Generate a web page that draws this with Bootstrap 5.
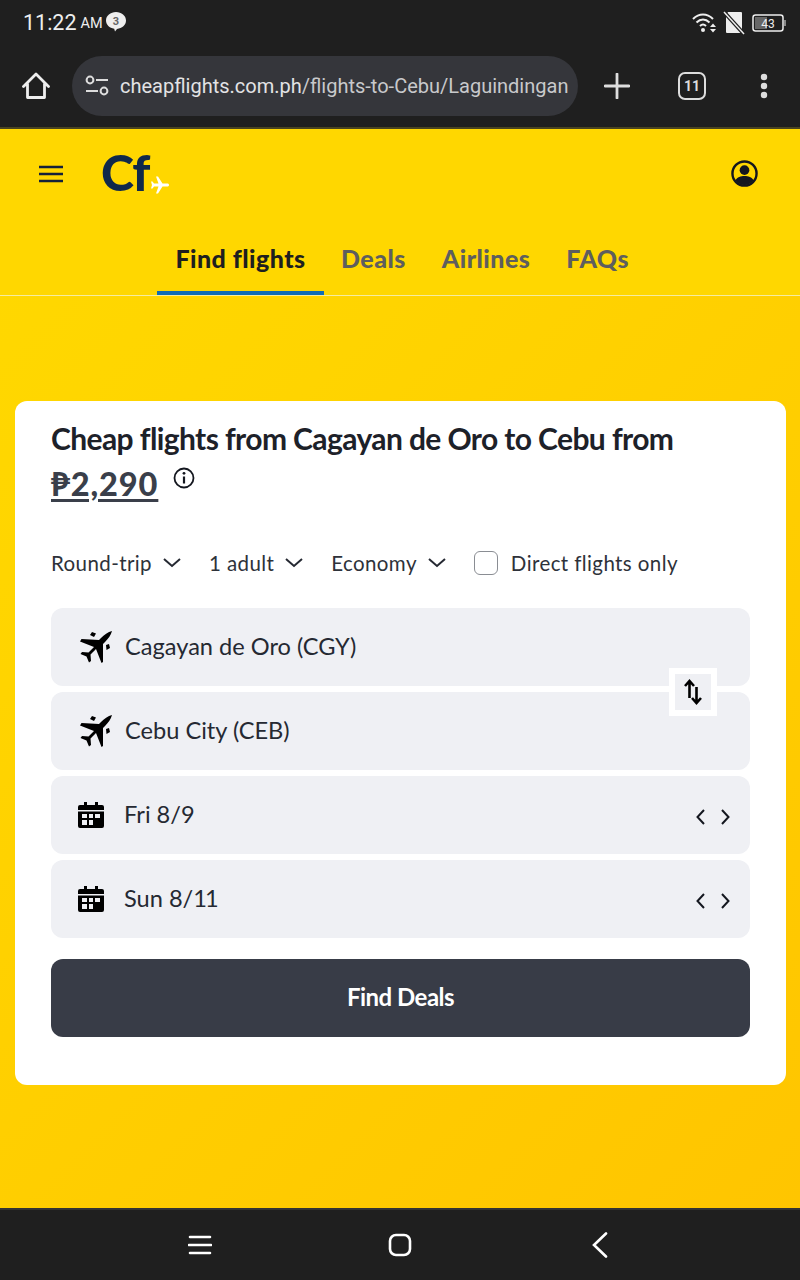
<!DOCTYPE html>
<html lang="en">
<head>
<meta charset="utf-8">
<title>Cheap flights</title>
<link rel="stylesheet" href="https://cdn.jsdelivr.net/npm/bootstrap@5.3.0/dist/css/bootstrap.min.css">
<style>
html,body{height:1280px;overflow:hidden;}
body{font-family:"Lato","Liberation Sans",sans-serif;background:#1f1f1f;}
.sys-bar{height:44px;background:#1f1f1f;padding:1px 14px 0 23px;color:#eee;font-family:Roboto,sans-serif;}
.sys-time{font-size:21.5px;line-height:1;}
.sys-ampm{font-size:14.5px;margin-left:4px;margin-right:2px;margin-top:3px;}
.chat-icon{margin-bottom:2px;}
.sys-icons{gap:7px;}
.tool-bar{height:83px;background:#1f1f1f;}
.tool-home{width:72px;}
.url-pill{width:506px;height:60px;background:#35363b;border-radius:30px;padding-left:13px;color:#c8c9cb;font-family:Roboto,sans-serif;font-size:20px;white-space:nowrap;gap:11px;}
.url-text{padding-top:1px;}
.url-host{color:#e3e3e5;}
.tool-act{padding-left:26px;}
.tab-count{width:28px;height:28px;margin-left:48px;border:2.5px solid #ddd;border-radius:7px;color:#ddd;font:700 14px/1 Roboto,sans-serif;}
.dots-icon{margin-left:54px;}
.rule-top{height:2px;background:#4a4420;}
.page-area{height:1079px;background:linear-gradient(135deg,#ffd900 0%,#ffd400 30%,#ffc500 100%);}
.head-top{height:167px;background:#ffd700;border-bottom:1px solid #f5eca0;}
.brand-row{height:87px;padding:2px 42px 0 39px;}
.logo-mark{font-weight:900;font-size:50px;line-height:1;color:#10294a;letter-spacing:-1px;margin-left:38px;position:relative;width:70px;top:-2px;}
.logo-plane{position:absolute;left:49px;top:29px;}
.tab-row{height:79px;padding-left:157px;}
.tab-link{font-weight:900;font-size:25px;letter-spacing:.45px;color:#5e5e5e;text-decoration:none;line-height:1;height:79px;padding:30px 0 0;display:block;white-space:nowrap;}
.tab-link.on{color:#1f1f1f;width:167px;text-align:center;border-bottom:4px solid #0f6cb5;margin-right:-19px;}
.gap-tabs{gap:36px;}
.search-card{margin:105px 14px 0 15px;height:684px;background:#fff;border-radius:12px;padding:20px 36px 0;}
.search-title{font-size:30px;font-weight:700;letter-spacing:-.6px;color:#1d2129;line-height:34px;margin:0;white-space:nowrap;}
.price-row{height:44px;margin-top:7px;}
.price-val{font-size:32.5px;font-weight:900;color:#3a3f4a;text-decoration:underline;text-decoration-thickness:3px;text-underline-offset:3px;line-height:1;letter-spacing:.9px;}
.info-icon{margin-left:7px;margin-bottom:12px;}
.opts-row{margin-top:43px;height:28px;font-size:20.5px;color:#2e323a;letter-spacing:.4px;white-space:nowrap;}
.opt-chev{margin-left:10px;}
.opt-gap{margin-left:27px;}
.check-box{width:24px;height:24px;border:1.5px solid #8a8d93;border-radius:6px;background:#fff;margin-right:13px;}
.fields{margin-top:31px;gap:6px;}
.field-box{height:78px;background:#eff0f4;border-radius:12px;padding:0 20px 0 27px;font-size:23.6px;color:#252932;}
.plane-icon{margin-left:1px;}
.field-text{margin-left:12px;}
.field-text.d{margin-left:20px;}
.tight-ones{letter-spacing:-2px;}
.swap-btn{position:absolute;right:33px;top:60px;width:48px;height:48px;background:#eff0f4;border:6px solid #fff;}
.go-btn{margin-top:21px;width:100%;height:78px;background:#383c47;color:#fff;border:0;border-radius:12px;font-size:24px;font-weight:700;letter-spacing:-.5px;padding-bottom:9px;}
.nav-bot{height:72px;background:#1f1f1f;border-top:2px solid #333;padding-left:188px;}
.nav-menu{margin-right:176px;}
.nav-home{margin-right:180px;}
</style>
</head>
<body>
<div class="sys-bar d-flex align-items-center justify-content-between">
  <div class="d-flex align-items-center">
    <span class="sys-time">11:22</span><span class="sys-ampm">AM</span>
    <svg class="chat-icon" width="22" height="22" viewBox="0 0 22 22"><path d="M11 1c5.500 0 10 3.600 10 8.500 0 4.600-4 8-9 8.400l-2 2.600-.8-2.800C4.500 17 1 13.800 1 9.500 1 4.600 5.500 1 11 1z" fill="#eee"/><text x="11" y="13.500" font-size="11" font-weight="700" text-anchor="middle" fill="#666" font-family="Roboto">3</text></svg>
  </div>
  <div class="sys-icons d-flex align-items-center">
    <svg width="24" height="22" viewBox="0 0 24 22"><g fill="none" stroke="#eee" stroke-width="2"><path d="M1 7c6-6 14-6 20 0"/><path d="M4.500 10.500c4-4 9-4 13 0"/><path d="M8 14c2-2 4-2 6 0"/></g><circle cx="11" cy="18" r="2" fill="#eee"/><path d="M18 15l3-3.500 3 3.500zM18 17h6l-3 3.500z" fill="#eee"/></svg>
    <svg width="22" height="24" viewBox="0 0 22 24"><path d="M5 1h13a1 1 0 0 1 1 1v19a1 1 0 0 1-1 1H4a1 1 0 0 1-1-1V4z" fill="#eee"/><path d="M1 1l20 22" stroke="#1f1f1f" stroke-width="4"/><path d="M1 1l20 22" stroke="#eee" stroke-width="1.500"/></svg>
    <svg width="34" height="18" viewBox="0 0 34 18"><rect x="1" y="1" width="30" height="16" rx="2.500" fill="none" stroke="#eee" stroke-width="1.500"/><rect x="3" y="3" width="12" height="12" fill="#666"/><rect x="32" y="6" width="2" height="6" fill="#888"/><text x="16" y="14" font-size="12" text-anchor="middle" fill="#eee" font-family="Roboto">43</text></svg>
  </div>
</div>
<div class="tool-bar d-flex align-items-center">
  <div class="tool-home d-flex justify-content-center">
    <svg width="28" height="28" viewBox="0 0 28 28"><path d="M1.500 14.500L14 2l12.500 12.500M5.500 12v13.500h17V12" fill="none" stroke="#eee" stroke-width="2.800" stroke-linejoin="round" stroke-linecap="round"/></svg>
  </div>
  <div class="url-pill d-flex align-items-center">
    <svg width="24" height="22" viewBox="0 0 24 22"><circle cx="5" cy="5" r="3.400" fill="none" stroke="#ddd" stroke-width="2"/><path d="M11 5h12M1 16h12" stroke="#ddd" stroke-width="2"/><circle cx="19" cy="16" r="3.400" fill="none" stroke="#ddd" stroke-width="2"/></svg>
    <span class="url-text"><span class="url-host">cheapflights.com.ph</span>/flights-to-Cebu/Laguindingan</span>
  </div>
  <div class="tool-act d-flex align-items-center">
    <svg width="26" height="26" viewBox="0 0 26 26"><path d="M13 1v24M1 13h24" stroke="#ddd" stroke-width="2.800" stroke-linecap="round"/></svg>
    <span class="tab-count d-flex align-items-center justify-content-center">11</span>
    <svg class="dots-icon" width="8" height="26" viewBox="0 0 8 26"><circle cx="4" cy="4" r="3.200" fill="#ddd"/><circle cx="4" cy="13" r="3.200" fill="#ddd"/><circle cx="4" cy="22" r="3.200" fill="#ddd"/></svg>
  </div>
</div>
<div class="rule-top"></div>
<div class="page-area">
  <div class="head-top">
    <div class="brand-row d-flex align-items-center justify-content-between">
      <div class="d-flex align-items-center">
        <svg width="24" height="18" viewBox="0 0 24 18"><path d="M0 2h24M0 9h24M0 16h24" stroke="#14213a" stroke-width="2.500"/></svg>
        <div class="logo-mark">Cf
          <svg class="logo-plane" width="20" height="18" viewBox="0 0 20 18"><path d="M19 9c0-1-1-1.400-2-1.400h-4.500L8 .5H6l2.500 7H4L2.500 5.500H1l1 3.500-1 3.500h1.500L4 10.500h4.500L6 17.500h2l4.500-7H17c1 0 2-.5 2-1.500z" fill="#fff"/></svg>
        </div>
      </div>
      <svg width="27" height="27" viewBox="0 0 28 28"><circle cx="14" cy="14" r="12.500" fill="none" stroke="#14171f" stroke-width="2.500"/><circle cx="14" cy="10.500" r="5" fill="#14171f"/><path d="M4.500 21c2-3.500 5.500-4.500 9.500-4.500s7.500 1 9.500 4.500c-2.500 3-5.500 5-9.500 5s-7-2-9.500-5z" fill="#14171f"/></svg>
    </div>
    <nav class="tab-row d-flex gap-tabs">
      <a class="tab-link on" href="#">Find flights</a>
      <a class="tab-link" href="#">Deals</a>
      <a class="tab-link" href="#">Airlines</a>
      <a class="tab-link" href="#">FAQs</a>
    </nav>
  </div>
  <div class="search-card">
    <h1 class="search-title">Cheap flights from Cagayan de Oro to Cebu from</h1>
    <div class="price-row d-flex align-items-center gap-2">
      <span class="price-val">₱2,290</span>
      <svg class="info-icon" width="22" height="22" viewBox="0 0 22 22"><circle cx="11" cy="11" r="9.500" fill="none" stroke="#14171f" stroke-width="1.800"/><path d="M11 9.500v7" stroke="#14171f" stroke-width="2.200"/><circle cx="11" cy="6.300" r="1.400" fill="#14171f"/></svg>
    </div>
    <div class="opts-row d-flex align-items-center">
      <span>Round-trip</span>
      <svg class="opt-chev" width="20" height="12" viewBox="0 0 20 12"><path d="M2 2l8 7 8-7" fill="none" stroke="#252932" stroke-width="2"/></svg>
      <span class="opt-gap">1 adult</span>
      <svg class="opt-chev" width="20" height="12" viewBox="0 0 20 12"><path d="M2 2l8 7 8-7" fill="none" stroke="#252932" stroke-width="2"/></svg>
      <span class="opt-gap">Economy</span>
      <svg class="opt-chev" width="20" height="12" viewBox="0 0 20 12"><path d="M2 2l8 7 8-7" fill="none" stroke="#252932" stroke-width="2"/></svg>
      <span class="check-box opt-gap"></span>
      <span>Direct flights only</span>
    </div>
    <div class="fields d-flex flex-column position-relative">
      <div class="field-box d-flex align-items-center">
        <svg class="plane-icon" width="34" height="34" viewBox="0 0 34 34"><path d="M33 1C32 5 29 9 26 12L24 14L24 32L22.500 33L17 19L11.500 24.500L12 31L10 32.500L7.500 26.500L1.500 24L3 22L9.500 22.500L15 17L1 11.500L2.500 9L20 10L22 8C25 5 29 2 33 1z" fill="#000"/><path d="M13 2l4 1.500L15 7l-4-2zM27 15l3-1 1 4-3.500 2z" fill="#000"/></svg>
        <span class="field-text">Cagayan de Oro (CGY)</span>
      </div>
      <div class="field-box d-flex align-items-center">
        <svg class="plane-icon" width="34" height="34" viewBox="0 0 34 34"><path d="M33 1C32 5 29 9 26 12L24 14L24 32L22.500 33L17 19L11.500 24.500L12 31L10 32.500L7.500 26.500L1.500 24L3 22L9.500 22.500L15 17L1 11.500L2.500 9L20 10L22 8C25 5 29 2 33 1z" fill="#000"/><path d="M13 2l4 1.500L15 7l-4-2zM27 15l3-1 1 4-3.500 2z" fill="#000"/></svg>
        <span class="field-text">Cebu City (CEB)</span>
      </div>
      <div class="swap-btn d-flex align-items-center justify-content-center">
        <svg width="18" height="26" viewBox="0 0 18 26"><path d="M5.500 19V2M1 7l4.500-5L10 7" fill="none" stroke="#000" stroke-width="2.600"/><path d="M12.500 8v16M8 19l4.500 5 4.500-5" fill="none" stroke="#000" stroke-width="2.600"/></svg>
      </div>
      <div class="field-box d-flex align-items-center justify-content-between">
        <div class="d-flex align-items-center">
          <svg width="26" height="26" viewBox="0 0 26 26"><path d="M2 3h4V0h3v3h8V0h3v3h4a2 2 0 0 1 2 2v3H0V5a2 2 0 0 1 2-2zM0 9.500h26V24a2 2 0 0 1-2 2H2a2 2 0 0 1-2-2zM4 12v4h5v-4zM11 12v4h4v-4zM17 12v4h5v-4zM4 18v5h5v-5zM11 18v5h4v-5z" fill="#000" fill-rule="evenodd"/></svg>
          <span class="field-text d">Fri 8/9</span>
        </div>
        <svg class="mt-1" width="34" height="16" viewBox="0 0 34 16"><path d="M8 1L1.500 8 8 15M26 1l6.500 7L26 15" fill="none" stroke="#14171f" stroke-width="2"/></svg>
      </div>
      <div class="field-box d-flex align-items-center justify-content-between">
        <div class="d-flex align-items-center">
          <svg width="26" height="26" viewBox="0 0 26 26"><path d="M2 3h4V0h3v3h8V0h3v3h4a2 2 0 0 1 2 2v3H0V5a2 2 0 0 1 2-2zM0 9.500h26V24a2 2 0 0 1-2 2H2a2 2 0 0 1-2-2zM4 12v4h5v-4zM11 12v4h4v-4zM17 12v4h5v-4zM4 18v5h5v-5zM11 18v5h4v-5z" fill="#000" fill-rule="evenodd"/></svg>
          <span class="field-text d">Sun 8/<span class="tight-ones">11</span></span>
        </div>
        <svg class="mt-1" width="34" height="16" viewBox="0 0 34 16"><path d="M8 1L1.500 8 8 15M26 1l6.500 7L26 15" fill="none" stroke="#14171f" stroke-width="2"/></svg>
      </div>
    </div>
    <button class="go-btn btn" type="button">Find Deals</button>
  </div>
</div>
<div class="nav-bot d-flex align-items-center">
  <svg class="nav-menu" width="24" height="20" viewBox="0 0 24 20"><path d="M2 2h20M1 10h22M2 18h20" stroke="#fff" stroke-width="2.600" stroke-linecap="round"/></svg>
  <svg class="nav-home" width="24" height="24" viewBox="0 0 24 24"><rect x="2" y="2" width="20" height="20" rx="6" fill="none" stroke="#fff" stroke-width="2.600"/></svg>
  <svg width="16" height="26" viewBox="0 0 16 26"><path d="M14 1.500L2 13l12 11.500" fill="none" stroke="#fff" stroke-width="2.600" stroke-linecap="round"/></svg>
</div>
<script src="https://cdn.jsdelivr.net/npm/bootstrap@5.3.0/dist/js/bootstrap.bundle.min.js"></script>
</body>
</html>
